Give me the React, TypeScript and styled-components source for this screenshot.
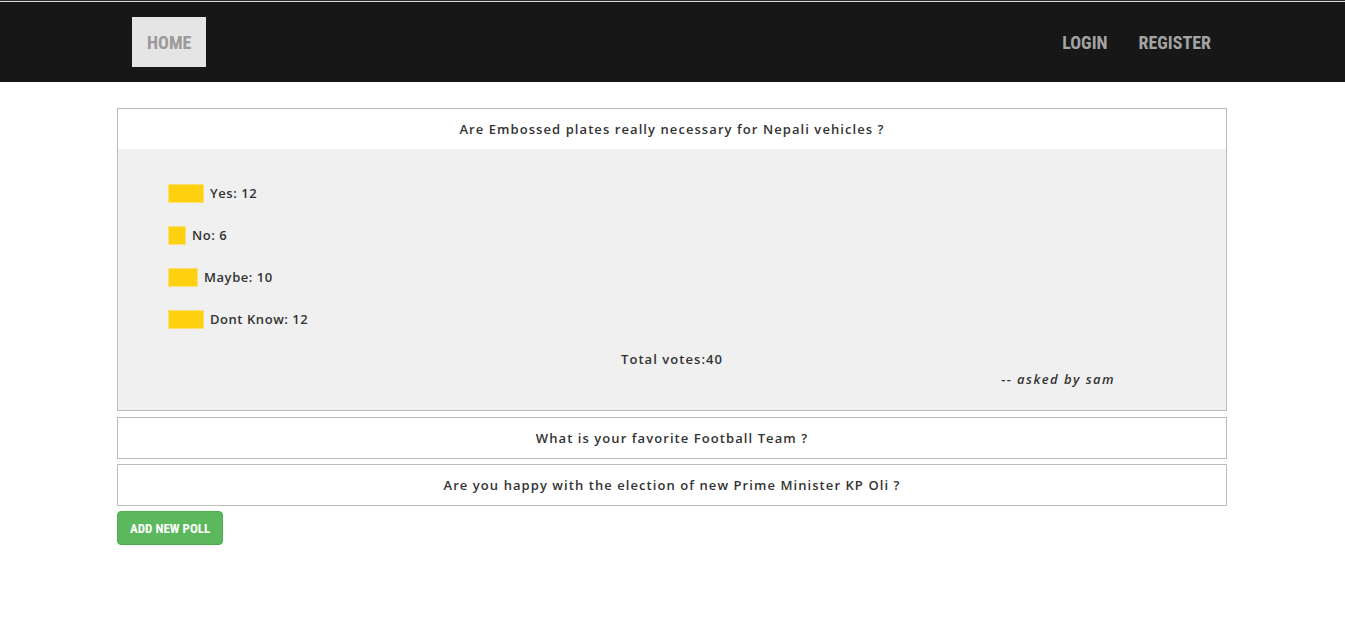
import React from "react";
import styled, { createGlobalStyle } from "styled-components";

const Global = createGlobalStyle`
  html, body { margin: 0; padding: 0; background: #fff; }
  body { font-family: "Open Sans", "Noto Sans", sans-serif; color: #333; }
  * { box-sizing: border-box; }
`;

const condensed = `"Roboto Condensed", "Liberation Sans Narrow", "DejaVu Sans Condensed", "Roboto", sans-serif`;

const TopBar = styled.header`
  background: #171717;
  border-top: 1px solid #2c2c2c;
  box-shadow: inset 0 1px 0 #d8d8d8;
`;

const NavInner = styled.nav`
  height: 81px;
  width: 1111px;
  margin: 0 auto;
  padding: 16px 2px 0 15px;
  display: flex;
  align-items: flex-start;
  justify-content: space-between;
`;

const NavLinks = styled.div`
  display: flex;
  align-items: center;
`;

const NavLink = styled.a<{ $active?: boolean }>`
  display: flex;
  align-items: center;
  justify-content: center;
  height: 50px;
  padding: 0 15px;
  margin-left: ${(p) => (p.$active ? "0" : "1px")};
  background: ${(p) => (p.$active ? "#e5e5e5" : "transparent")};
  color: ${(p) => (p.$active ? "#9a9a9a" : "#a3a3a3")};
  font-family: ${condensed};
  font-stretch: condensed;
  font-weight: 700;
  font-size: 18px;
  text-decoration: none;
  text-transform: uppercase;
`;

const Main = styled.main`
  width: 1111px;
  margin: 26px auto 0;
  padding: 0 1px 0 0;
`;

const Panel = styled.section<{ $open?: boolean }>`
  border: 1px solid #bbb;
  margin-bottom: ${(p) => (p.$open ? "6px" : "5px")};
  background: #fff;
`;

const PanelHeading = styled.div`
  height: 40px;
  display: flex;
  align-items: center;
  justify-content: center;
  font-size: 13px;
  font-weight: 600;
  letter-spacing: 1.07px;
  color: #333;
`;

const PanelBody = styled.div`
  background: #f0f0f0;
  padding: 23px 0 21px;
`;

const OptionList = styled.ul`
  list-style: none;
  margin: 0;
  padding: 0 0 0 50px;
`;

const OptionRow = styled.li`
  height: 42px;
  display: flex;
  align-items: center;
  gap: 6px;
  font-size: 13px;
  font-weight: 600;
  letter-spacing: 0.55px;
  color: #333;
`;

const Bar = styled.span`
  display: inline-block;
  height: 19px;
  background: #fdd10f;
  border: 1px solid #fbe07a;
`;

const Total = styled.div`
  margin-top: 9px;
  line-height: 20px;
  text-align: center;
  font-size: 13px;
  font-weight: 600;
  letter-spacing: 1.05px;
`;

const Asker = styled.div`
  line-height: 20px;
  text-align: right;
  padding-right: 111px;
  font-size: 13px;
  font-style: italic;
  font-weight: 600;
  letter-spacing: 1.45px;
`;

const AddButton = styled.button`
  height: 34px;
  padding: 0 12px;
  background: #5cb85c;
  border: 1px solid #4cae4c;
  border-radius: 4px;
  color: #fff;
  font-family: ${condensed};
  font-stretch: condensed;
  font-weight: 700;
  font-size: 13px;
  text-transform: uppercase;
  cursor: pointer;
`;

const options = [
  { label: "Yes", votes: 12 },
  { label: "No", votes: 6 },
  { label: "Maybe", votes: 10 },
  { label: "Dont Know", votes: 12 },
];

export default function App() {
  const total = options.reduce((s, o) => s + o.votes, 0);
  return (
    <>
      <Global />
      <TopBar>
        <NavInner>
          <NavLinks>
            <NavLink $active href="#">Home</NavLink>
          </NavLinks>
          <NavLinks>
            <NavLink href="#">Login</NavLink>
            <NavLink href="#">Register</NavLink>
          </NavLinks>
        </NavInner>
      </TopBar>
      <Main>
        <Panel $open>
          <PanelHeading>Are Embossed plates really necessary for Nepali vehicles ?</PanelHeading>
          <PanelBody>
            <OptionList>
              {options.map((o) => (
                <OptionRow key={o.label}>
                  <Bar style={{ width: o.votes * 3 }} />
                  {o.label}: {o.votes}
                </OptionRow>
              ))}
            </OptionList>
            <Total>Total votes:{total}</Total>
            <Asker>-- asked by sam</Asker>
          </PanelBody>
        </Panel>
        <Panel>
          <PanelHeading>What is your favorite Football Team ?</PanelHeading>
        </Panel>
        <Panel>
          <PanelHeading>Are you happy with the election of new Prime Minister KP Oli ?</PanelHeading>
        </Panel>
        <AddButton>Add new poll</AddButton>
      </Main>
    </>
  );
}
